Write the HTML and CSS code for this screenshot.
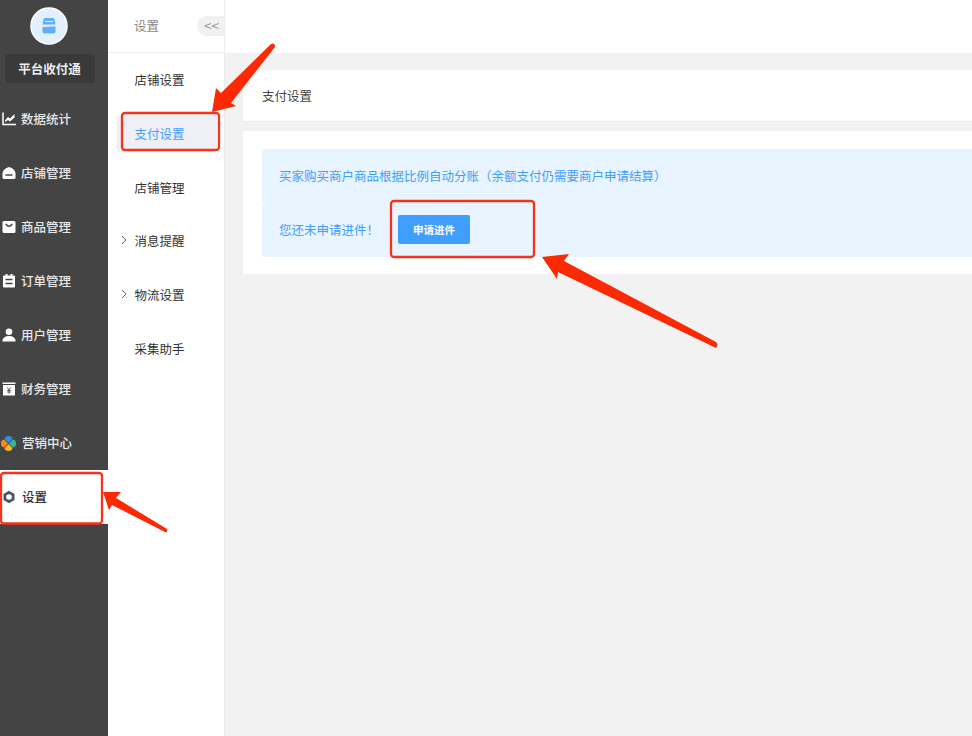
FILE: index.html
```html
<!DOCTYPE html>
<html lang="zh-CN">
<head>
<meta charset="utf-8">
<title>支付设置</title>
<link rel="stylesheet" href="styles.css">
</head>
<body>
<div class="app">
  <aside class="sidebar">
    <div class="logo">
      <svg width="38" height="38" viewBox="0 0 38 38"><circle cx="19" cy="19" r="18" fill="#e2f0ff" stroke="#fff" stroke-width="1.5"/><path d="M13.5 12.5q0-1.500 1.500-1.500h8q1.500 0 1.500 1.500l1 5h-13z" fill="#62aef8"/><path d="M12.500 19.500h13v5q0 2-2 2h-9q-2 0-2-2z" fill="#62aef8"/><path d="M15 14.500h8" stroke="#e2f0ff" stroke-width="1"/><path d="M12.500 19q3 1.500 6.500 0t6.500 0" stroke="#e2f0ff" stroke-width="1" fill="none"/></svg>
    </div>
    <div class="brand">平台收付通</div>
    <nav class="side-nav">
      <a class="side-item"><svg class="ico" viewBox="0 0 14 14"><path d="M1 .5v12h13" fill="none" stroke="#fff" stroke-width="1.500"/><path d="M3 8.500l3-3.500 2 1.500 4.500-4.500v3.500l-4.500 4-2-1.500-2.500 2z" fill="#fff"/></svg><span>数据统计</span></a>
      <a class="side-item"><svg class="ico" viewBox="0 0 14 14"><path d="M.5 7.500q.5-5 6.500-6.500 6 1.500 6.500 6.500v4q0 1.500-1.500 1.500H2q-1.500 0-1.500-1.500z" fill="#fff"/><path d="M3.500 9h7" stroke="#444" stroke-width="1.500"/></svg><span>店铺管理</span></a>
      <a class="side-item"><svg class="ico" viewBox="0 0 14 14"><rect x=".5" y="1" width="13" height="12" rx="1.500" fill="#fff"/><path d="M3.800 4q3.200 4.500 6.400 0" fill="none" stroke="#444" stroke-width="1.600"/></svg><span>商品管理</span></a>
      <a class="side-item"><svg class="ico" viewBox="0 0 14 14"><rect x="1" y="1.500" width="12" height="12" rx="1" fill="#fff"/><rect x="3.500" y="0" width="2" height="3" fill="#fff"/><rect x="8.500" y="0" width="2" height="3" fill="#fff"/><path d="M3.500 5.500h7M3.500 9.500h7" stroke="#444" stroke-width="1.500"/></svg><span>订单管理</span></a>
      <a class="side-item"><svg class="ico" viewBox="0 0 14 14"><circle cx="7" cy="3.800" r="3.300" fill="#fff"/><path d="M.3 13.500q.3-5.500 6.700-5.500t6.700 5.500z" fill="#fff"/></svg><span>用户管理</span></a>
      <a class="side-item"><svg class="ico" viewBox="0 0 14 14"><rect x=".5" y=".5" width="13" height="1.500" fill="#fff"/><rect x="1" y="3" width="12" height="10.500" fill="#fff"/><path d="M5.300 5.500L7 7.800l1.700-2.300M5.300 8.500h3.400M5.300 10h3.400M7 8v3.500" stroke="#555" stroke-width="1" fill="none"/></svg><span>财务管理</span></a>
      <a class="side-item"><svg class="ico ico-wide" viewBox="0 0 15 15"><path d="M7.500 7L3.500 3Q4 0 7.500 0T11.500 3z" fill="#2f8fe8"/><path d="M7 7.500L3 3.500Q0 4 0 7.500T3 11.500z" fill="#f58a23"/><path d="M8 7.500L12 3.500Q15 4 15 7.500T12 11.500z" fill="#35b59a"/><path d="M7.500 8L11.500 12Q11 15 7.500 15T3.500 12z" fill="#f8b52e"/></svg><span>营销中心</span></a>
      <a class="side-item active"><svg class="ico" viewBox="0 0 14 14"><path d="M7 .8l5.500 3.100v6.200L7 13.200l-5.500-3.100V3.900z" fill="#4c5562"/><circle cx="7" cy="7" r="2.800" fill="#fff"/></svg><span>设置</span></a>
    </nav>
  </aside>

  <section class="subnav">
    <header class="subnav-head">
      <span class="subnav-title">设置</span>
      <span class="collapse">&lt;&lt;</span>
    </header>
    <ul class="sub-list">
      <li class="sub-item">店铺设置</li>
      <li class="sub-item current"><span class="sub-pill">支付设置</span></li>
      <li class="sub-item">店铺管理</li>
      <li class="sub-item lifted"><svg class="chev" viewBox="0 0 6 10"><path d="M1 1l4 4-4 4" fill="none" stroke="#666" stroke-width="1"/></svg>消息提醒</li>
      <li class="sub-item lifted"><svg class="chev" viewBox="0 0 6 10"><path d="M1 1l4 4-4 4" fill="none" stroke="#666" stroke-width="1"/></svg>物流设置</li>
      <li class="sub-item lifted">采集助手</li>
    </ul>
  </section>

  <main class="main">
    <div class="topbar"></div>
    <div class="content">
      <div class="title-card">支付设置</div>
      <div class="panel">
        <div class="notice">
          <div class="notice-row">买家购买商户商品根据比例自动分账（余额支付仍需要商户申请结算）</div>
          <div class="notice-row notice-action">
            <span>您还未申请进件！</span>
            <button class="apply-btn" type="button">申请进件</button>
          </div>
        </div>
      </div>
    </div>
  </main>
</div>

<svg class="annotations" width="972" height="736" viewBox="0 0 972 736">
  <g fill="none" stroke="#f8321a" stroke-width="2.300">
    <rect x="122" y="113" width="97" height="37" rx="3"/>
    <rect x="391" y="201" width="143" height="56" rx="3"/>
    <rect x="1" y="473" width="101" height="50.500" rx="3"/>
  </g>
  <g fill="#fb2a05">
    <path d="M212 112L216 88L221 93L271 44Q275 42 275 47L231 103L236 106z"/>
    <path d="M103 492L121 492L116 498L167 529Q168 533 165 532L112 505L109 510z"/>
    <path d="M542 257L569 254L564 261L716 342Q719 345 716 348L558 272L557 279z"/>
  </g>
</svg>
</body>
</html>
```
FILE: styles.css
```css
* { box-sizing: border-box; }
html, body {
  margin: 0;
  width: 972px;
  height: 736px;
  overflow: hidden;
}
body {
  position: relative;
  font-family: "Noto Sans CJK SC", "Noto Sans", sans-serif;
  font-size: 12.5px;
  color: #333;
}
.app {
  display: flex;
  height: 736px;
}

/* primary sidebar */
.sidebar {
  flex: 0 0 108px;
  background: #444;
  display: flex;
  flex-direction: column;
  align-items: stretch;
}
.logo {
  display: flex;
  justify-content: center;
  padding: 7px 10px 0 0;
  height: 54px;
}
.logo svg { display: block; }
.brand {
  margin: 0 13px 0 5px;
  height: 29px;
  line-height: 29px;
  padding-right: 1px;
  background: #3a3a3a;
  border-radius: 3px;
  color: #eee;
  font-weight: 700;
  text-align: center;
  font-size: 12.5px;
}
.side-nav {
  margin-top: 9px;
  display: flex;
  flex-direction: column;
}
.side-item {
  height: 54px;
  display: flex;
  align-items: center;
  gap: 5px;
  padding-left: 2px;
  color: #e8e8e8;
  font-weight: 500;
}
.side-item span { padding-bottom: 2px; }
.side-item.active {
  background: #fff;
  color: #333;
}
.side-item.active span { margin-left: 1px; }
.ico {
  width: 14px;
  height: 14px;
  flex: none;
}
.ico-wide {
  width: 15px;
  height: 15px;
  margin-left: -1px;
  margin-right: 1px;
}

/* secondary nav */
.subnav {
  flex: 0 0 117px;
  background: #fff;
  border-right: 1px solid #ececec;
}
.subnav-head {
  height: 53px;
  border-bottom: 1px solid #eee;
  display: flex;
  align-items: center;
  justify-content: space-between;
  padding-left: 26px;
  color: #888;
}
.subnav-title { padding-bottom: 2px; }
.collapse {
  width: 27px;
  height: 20px;
  line-height: 19px;
  margin-bottom: 1px;
  padding-left: 7px;
  background: #f1f1f1;
  border-radius: 10px 0 0 10px;
  color: #999;
  font-size: 13.500px;
}
.sub-list {
  list-style: none;
  margin: 0;
  padding: 0;
}
.sub-item {
  position: relative;
  height: 54px;
  display: flex;
  align-items: center;
  padding: 0 0 2px 26.500px;
  color: #333;
}
.sub-item.lifted { padding-bottom: 4px; }
.sub-item.current { padding: 0 0 0 9px; }
.sub-pill {
  flex: 0 0 100px;
  height: 37px;
  line-height: 37px;
  margin-top: -1px;
  padding-left: 17.500px;
  background: #eef0f5;
  color: #409eff;
  border-radius: 3px;
}
.chev {
  position: absolute;
  left: 13px;
  top: 20px;
  width: 6px;
  height: 10px;
}

/* main */
.main {
  flex: 1;
  min-width: 0;
  background: #f2f2f2;
}
.topbar {
  height: 53px;
  background: #fff;
}
.content {
  padding: 17px 0 0 18px;
}
.title-card {
  height: 52px;
  line-height: 51px;
  padding-left: 19px;
  background: #fff;
  border-bottom: 1px solid #eee;
  color: #444;
}
.panel {
  margin-top: 9px;
  height: 143px;
  padding: 18px 0 0 19px;
  background: #fff;
}
.notice {
  color: #409eff;
}
.notice-row {
  height: 54px;
  background: #e8f4ff;
  border-radius: 3px 0 0 3px;
  padding: 0 0 2px 17px;
  display: flex;
  align-items: center;
}
.notice-action span { width: 119px; }
.apply-btn {
  width: 72px;
  height: 29px;
  padding: 0;
  border: 0;
  border-radius: 2px;
  background: #409eff;
  color: #fff;
  font: 700 10.500px "Noto Sans CJK SC", "Noto Sans", sans-serif;
}

/* tutorial markup drawn over the screenshot */
.annotations {
  position: absolute;
  left: 0;
  top: 0;
  pointer-events: none;
}
```
